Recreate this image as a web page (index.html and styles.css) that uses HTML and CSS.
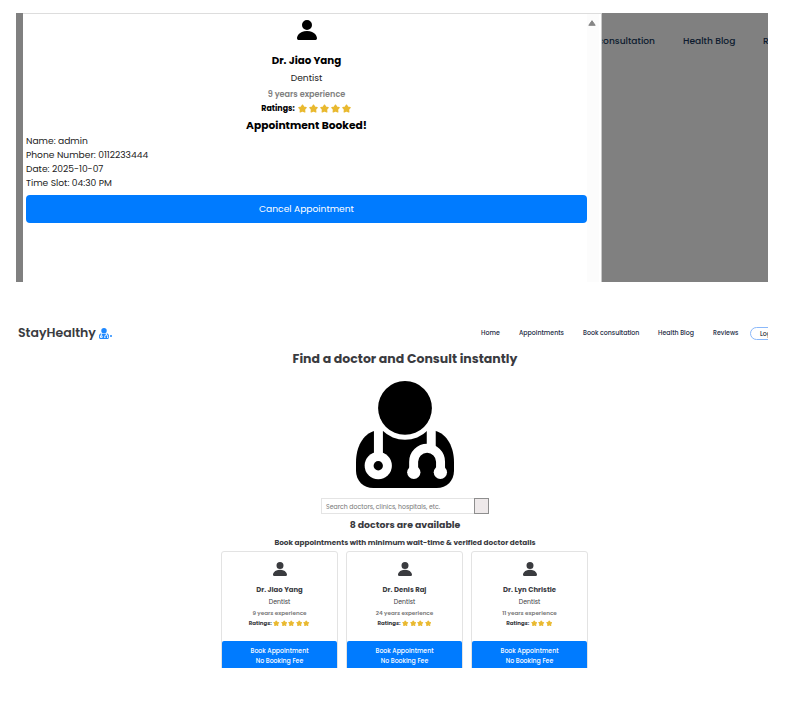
FILE: index.html
```html
<!DOCTYPE html>
<html lang="en">
<head>
<meta charset="utf-8">
<title>StayHealthy</title>
<link rel="stylesheet" href="styles.css">
</head>
<body>
<svg class="defs" width="0" height="0">
  <symbol id="person" viewBox="2 2 12 12"><path d="M3 14s-1 0-1-1 1-4.400 6-4.400 6 3.400 6 4.400-1 1-1 1zm5-6a3 3 0 1 0 0-6 3 3 0 0 0 0 6"/></symbol>
  <symbol id="star" viewBox="0 0 20 20"><path d="M10 2.500l2.700 4.500 5.300 1.100-3.700 4 .7 5.400-5-2.300-5 2.300.7-5.400L2 8.100 7.300 7z" fill="#e9b92f" stroke="#e9b92f" stroke-width="3" stroke-linejoin="round"/></symbol>
  <symbol id="doctor" viewBox="0 0 295 322">
    <path d="M57 150C20 160 0 200 0 245V270C0 300 22 322 52 322H243C273 322 295 300 295 270V245C295 200 275 160 238 150Z" fill="currentColor"/>
    <g fill="#fff"><circle cx="147.500" cy="81" r="96"/><path d="M54 140h27v80H54zM213 140h27v62h-27z"/><circle cx="67" cy="255" r="41"/><circle cx="174" cy="275" r="20"/><circle cx="254" cy="275" r="20"/></g>
    <path d="M173.500 275V243a40.500 40.500 0 0 1 81 0V275" fill="none" stroke="#fff" stroke-width="27"/>
    <g fill="currentColor"><circle cx="147.500" cy="81" r="81"/><circle cx="67" cy="255" r="14"/></g>
  </symbol>
</svg>

<section class="booking">
  <div class="dialog">
    <div class="dialog-body">
      <svg class="avatar"><use href="#person"/></svg>
      <h3 class="name"><span>Dr. Jiao Yang</span></h3>
      <p class="specialty"><span>Dentist</span></p>
      <p class="experience"><span>9 years experience</span></p>
      <p class="ratings"><span>Ratings:</span><i class="stars"><svg><use href="#star"/></svg><svg><use href="#star"/></svg><svg><use href="#star"/></svg><svg><use href="#star"/></svg><svg><use href="#star"/></svg></i></p>
      <h3 class="booked"><span>Appointment Booked!</span></h3>
      <div class="details">
        <p>Name: admin</p>
        <p>Phone Number: 0112233444</p>
        <p>Date: 2025-10-07</p>
        <p>Time Slot: 04:30 PM</p>
      </div>
      <div class="cancel">Cancel Appointment</div>
    </div>
    <div class="scrollbar"><svg class="arrow" viewBox="0 0 8 6"><path d="M4 .7L7.200 5.300H.8z" fill="#858585" stroke="#858585" stroke-linejoin="round"/></svg></div>
  </div>
  <nav class="dim-nav"><div class="cut"><span>consultation</span></div><span class="blog">Health Blog</span><span class="rev">Reviews</span></nav>
</section>

<section class="page">
  <header class="top">
    <div class="logo">StayHealthy</div>
    <svg class="logo-icon"><use href="#doctor"/></svg><b class="dot"></b>
    <nav class="links"><span class="n1">Home</span><span class="n2">Appointments</span><span class="n3">Book consultation</span><span class="n4">Health Blog</span><span class="n5">Reviews</span></nav>
    <div class="login">Login</div>
  </header>
  <h1 class="title"><span>Find a doctor and Consult instantly</span></h1>
  <svg class="hero"><use href="#doctor"/></svg>
  <div class="search"><div class="field">Search doctors, clinics, hospitals, etc.</div><div class="go"></div></div>
  <h2 class="count"><span>8 doctors are available</span></h2>
  <h3 class="sub"><span>Book appointments with minimum wait-time &amp; verified doctor details</span></h3>
  <div class="cards">
    <article class="card">
      <svg class="avatar"><use href="#person"/></svg>
      <h4 class="name">Dr. Jiao Yang</h4><p class="specialty">Dentist</p><p class="experience">9 years experience</p>
      <p class="ratings"><span>Ratings:</span><i class="stars"><svg><use href="#star"/></svg><svg><use href="#star"/></svg><svg><use href="#star"/></svg><svg><use href="#star"/></svg><svg><use href="#star"/></svg></i></p>
      <div class="book"><div>Book Appointment</div><div>No Booking Fee</div></div>
    </article>
    <article class="card">
      <svg class="avatar"><use href="#person"/></svg>
      <h4 class="name">Dr. Denis Raj</h4><p class="specialty">Dentist</p><p class="experience">24 years experience</p>
      <p class="ratings"><span>Ratings:</span><i class="stars"><svg><use href="#star"/></svg><svg><use href="#star"/></svg><svg><use href="#star"/></svg><svg><use href="#star"/></svg></i></p>
      <div class="book"><div>Book Appointment</div><div>No Booking Fee</div></div>
    </article>
    <article class="card">
      <svg class="avatar"><use href="#person"/></svg>
      <h4 class="name">Dr. Lyn Christie</h4><p class="specialty">Dentist</p><p class="experience">11 years experience</p>
      <p class="ratings"><span>Ratings:</span><i class="stars"><svg><use href="#star"/></svg><svg><use href="#star"/></svg><svg><use href="#star"/></svg></i></p>
      <div class="book"><div>Book Appointment</div><div>No Booking Fee</div></div>
    </article>
  </div>
</section>
</body>
</html>
```
FILE: styles.css
```css
* { box-sizing: border-box; margin: 0; padding: 0; }
body { width: 791px; height: 725px; padding: 13px 23px 0 16px; background: #fff; overflow: hidden;
  font-family: Poppins, Inter, sans-serif; white-space: nowrap; }
svg { display: block; flex: none; }
.defs { position: absolute; }
h1, h2, h3, h4, p { text-align: center; }

/* Booking dialog */
.booking { display: flex; width: 752px; height: 269px; padding-left: 7px; background: #808080; overflow: hidden; }
.dialog { display: flex; flex: none; width: 579px; height: 269px; background: #fff; border-top: 1px solid #ddd; border-right: 1px solid #c8c8c8; }
.dialog-body { flex: none; width: 564px; padding: 6px 0 0 3px; }
.dialog .avatar { width: 20px; height: 20px; margin: 0 auto; }
.dialog .name { margin-top: 12px; font-size: 10.300px; line-height: 17px; font-weight: 700; }
.dialog .specialty { margin-top: 1px; font-size: 9.150px; line-height: 16px; color: #222; }
.dialog .experience { font-size: 8.100px; line-height: 16px; font-weight: 600; color: #808080; }
.ratings { display: flex; justify-content: center; align-items: center; font-weight: 700; }
.stars { display: flex; }
.dialog .ratings { height: 13px; font-size: 7.900px; gap: 2px; }
.dialog .stars svg { width: 9px; height: 9px; margin: 0 1px; }
.dialog .booked { margin-top: 2px; font-size: 10.700px; line-height: 17px; }
.details p { text-align: left; font-size: 9.150px; line-height: 14px; color: #222; }
.cancel { margin-top: 5px; height: 28px; line-height: 28px; border-radius: 4px; background: #007bff; color: #fff; font-size: 9.150px; text-align: center; }
.scrollbar { flex: none; width: 12px; background: #fcfcfc; padding-top: 6px; }
.arrow { width: 8px; height: 6px; margin-left: 1px; }
.dim-nav { display: flex; height: 20px; margin-top: 18px; line-height: 20px; font-size: 9.100px; font-weight: 500; color: #0d1b2e; }
.cut { display: flex; justify-content: flex-end; flex: none; width: 53px; overflow: hidden; }
.blog { flex: none; margin-left: 28px; width: 80px; }

/* Search page */
.page { width: 752px; height: 352px; margin-top: 34px; overflow: hidden; color: #3a3b3f; }
.top { display: flex; align-items: center; height: 34px; padding-left: 2px; }
.top > * { flex: none; }
.logo { width: 81px; font-size: 12.500px; font-weight: 600; }
.logo-icon { width: 10px; height: 11px; color: #1e88ff; }
.dot { width: 2px; height: 2px; margin: 6px 0 0 1px; border-radius: 1px; background: #1e88ff; }
.links { display: flex; margin-left: 369px; font-size: 6.250px; font-weight: 500; color: #1c2c44; }
.n1 { width: 38px; } .n2 { width: 64px; } .n3 { width: 75px; } .n4 { width: 55px; } .n5 { width: 37px; }
.login { width: 46px; height: 13px; border: 1px solid #8ab8fa; border-radius: 7px; padding-left: 9px; font-size: 6.250px; line-height: 11px; font-weight: 500; }
.title { margin-top: 0; font-size: 12.500px; line-height: 18px; }
.title, .count, .sub { width: 778px; }
.hero { width: 98px; height: 107px; margin: 13px 0 0 340px; color: #000; }
.search { display: flex; width: 168px; height: 16px; margin: 10px 0 0 305px; }
.field { width: 153px; border: 1px solid #e4e4e4; border-right: 0; padding-left: 4px; font-size: 6.200px; line-height: 15px; color: #777; }
.go { width: 15px; background: #eee9ea; border: 1px solid #8e8e8e; }
.count { margin-top: 3px; font-size: 9.400px; line-height: 15px; }
.sub { margin-top: 5px; font-size: 7.300px; line-height: 12px; }
.cards { display: flex; gap: 8px; margin: 2px 0 0 205px; }
.card { width: 117px; height: 130px; border: 1px solid #e3e3e3; border-radius: 3px; }
.card .avatar { width: 14px; height: 14px; margin: 10px auto 0; fill: #3a3b3f; }
.card .name { margin-top: 8px; font-size: 6.900px; line-height: 12px; }
.card .specialty { font-size: 6.200px; line-height: 12px; }
.card .experience { font-size: 5.650px; line-height: 10px; color: #777; font-weight: 600; }
.card .ratings { height: 10px; font-size: 5.500px; gap: 1px; }
.card .stars svg { width: 6.500px; height: 6.500px; margin: 0 .5px; }
.book { height: 40px; margin-top: 13px; padding-top: 5px; border-radius: 2px 2px 0 0; background: #007bff; color: #fff; font-size: 6.200px; line-height: 10px; text-align: center; font-weight: 500; }
```
